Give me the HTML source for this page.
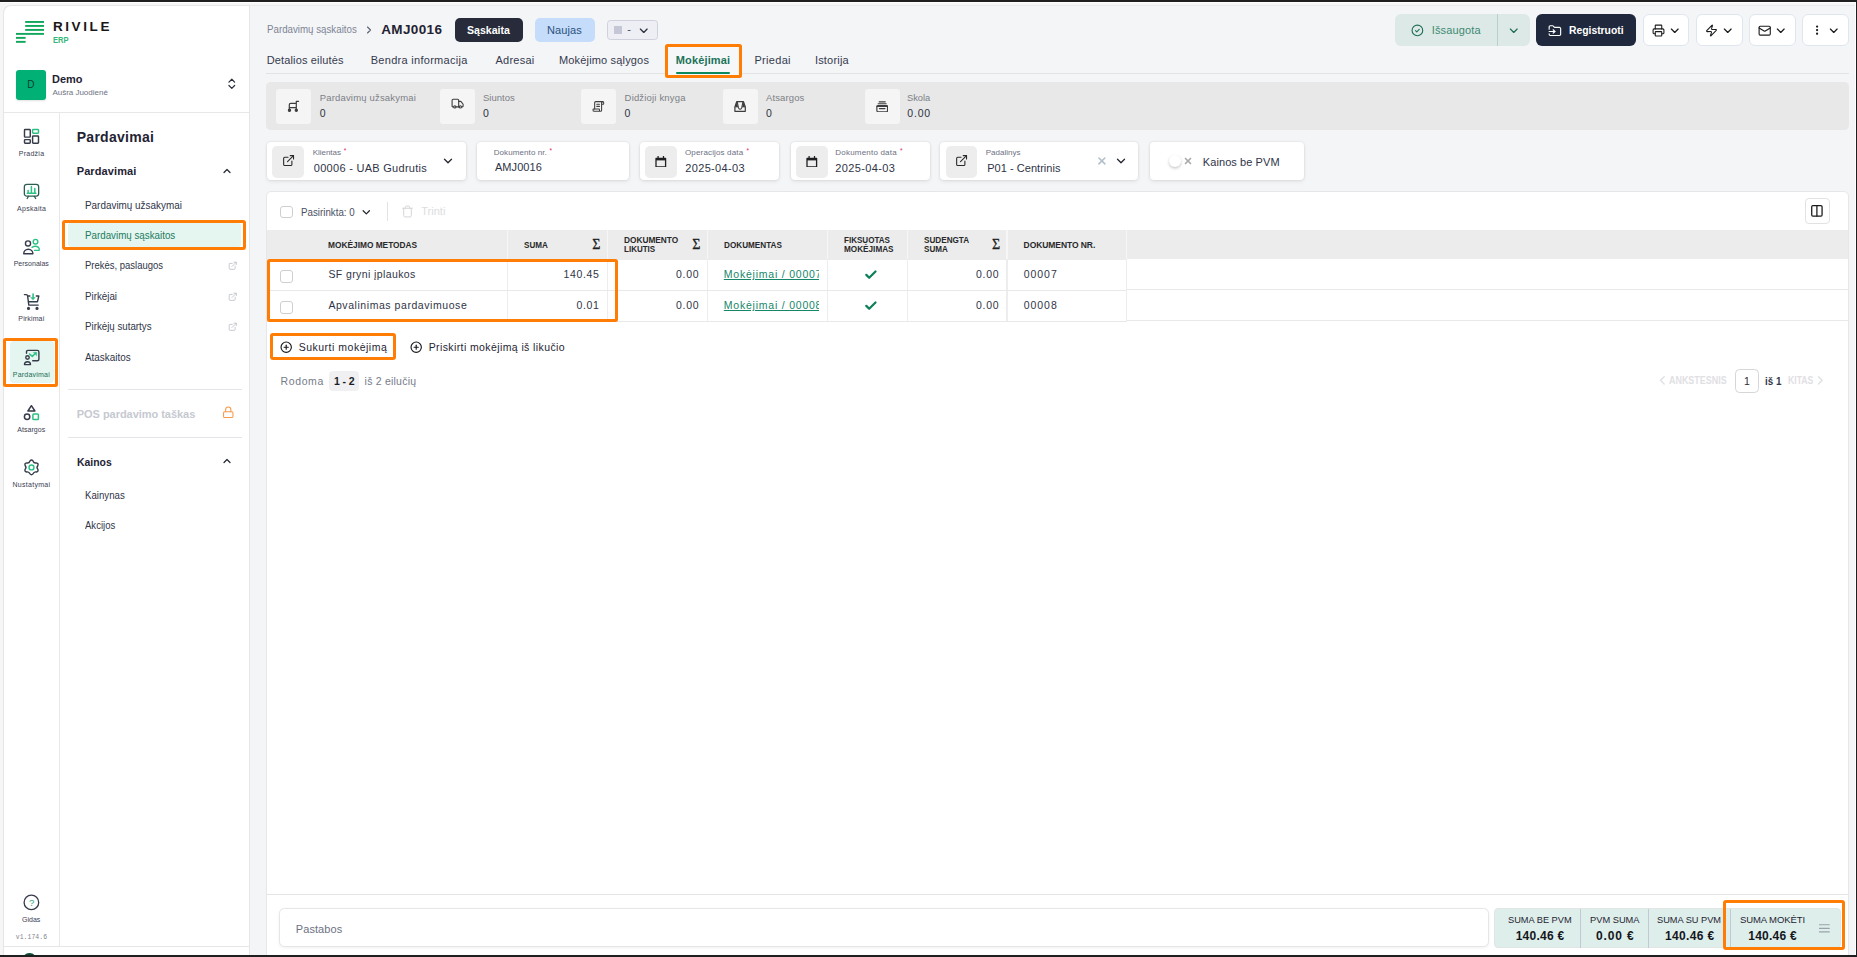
<!DOCTYPE html>
<html lang="lt"><head><meta charset="utf-8"><title>Rivile ERP – Pardavimų sąskaitos – AMJ0016</title>
<style>html,body{margin:0;padding:0}
html{background:#f4f5f7}
body{width:1857px;height:957px;overflow:hidden;position:relative;background:#f4f5f7;font-family:"Liberation Sans",sans-serif;-webkit-font-smoothing:antialiased}
body div,body span,body b,body a,body label,body h1,body svg,body aside,body main,header,nav,section,form,footer{position:absolute;box-sizing:border-box;margin:0;padding:0}
header,nav,section,form,footer{left:0;top:0;width:0;height:0}
.t{white-space:nowrap;line-height:1;font-weight:400;transform-origin:0 0}
aside{left:3.2px;top:5px;width:246.8px;height:952px;overflow:hidden}
main{left:0;top:0;width:1857px;height:957px;overflow:hidden}
.frame{background:#1f1f1f}
</style></head>
<body>
<!-- window frame --><div style="left:0px;top:3.3px;width:1857px;height:2.2px;background:#f6f6f6"></div><div style="left:250px;top:5.3px;width:1606px;height:0.8px;background:#ebebec"></div><div style="left:0px;top:5px;width:4px;height:952px;background:#f6f6f6"></div>
<main><header><span class="t" style="left:266.70px;top:24px;font-size:10.0px;line-height:11px;transform:scaleX(0.9733);color:#7d8495;">Pardavimų sąskaitos</span><svg style="left:363px;top:24.2px;width:12px;height:12px;" viewBox="0 0 24 24" fill="none" stroke-linecap="round" stroke-linejoin="round" stroke="#5d6270" stroke-width="2.2"><path d="m9 18 6-6-6-6"/></svg><h1 class="t" style="left:381.20px;top:22px;font-size:13.5px;line-height:15px;letter-spacing:0.362px;font-weight:700;color:#1f2333;">AMJ0016</h1><div style="left:454.8px;top:17.9px;width:68px;height:24px;background:#272b3a;border-radius:5px"></div><b class="t" style="left:467.20px;top:24px;font-size:11.0px;line-height:12px;transform:scaleX(0.9621);font-weight:700;color:#fff;">Sąskaita</b><div style="left:535px;top:17.9px;width:59.5px;height:24px;background:#c5dcfb;border-radius:5px"></div><span class="t" style="left:546.90px;top:24px;font-size:11.0px;line-height:12px;letter-spacing:0.112px;color:#2a527c;">Naujas</span><div style="left:606.8px;top:20px;width:50.8px;height:19.8px;background:#eeeff4;border:1px solid #cfd1dc;border-radius:3.5px"></div><div style="left:613.7px;top:26px;width:8.1px;height:7.9px;background:#c6c7d6"></div><span class="t" style="left:627.30px;top:23px;font-size:11.0px;line-height:12px;color:#3f4454;">-</span><svg style="left:637.3px;top:24.2px;width:13.5px;height:13.5px;" viewBox="0 0 24 24" fill="none" stroke-linecap="round" stroke-linejoin="round" stroke="#2d3140" stroke-width="2.3"><path d="m6 9 6 6 6-6"/></svg></header><nav><span class="t" style="left:266.70px;top:54px;font-size:11.0px;line-height:12px;letter-spacing:0.147px;color:#353a4e;">Detalios eilutės</span><span class="t" style="left:370.70px;top:54px;font-size:11.0px;line-height:12px;letter-spacing:0.289px;color:#353a4e;">Bendra informacija</span><span class="t" style="left:495.50px;top:54px;font-size:11.0px;line-height:12px;letter-spacing:0.241px;color:#353a4e;">Adresai</span><span class="t" style="left:559.00px;top:54px;font-size:11.0px;line-height:12px;letter-spacing:0.165px;color:#353a4e;">Mokėjimo sąlygos</span><span class="t" style="left:754.40px;top:54px;font-size:11.0px;line-height:12px;letter-spacing:0.317px;color:#353a4e;">Priedai</span><span class="t" style="left:814.90px;top:54px;font-size:11.0px;line-height:12px;letter-spacing:0.203px;color:#353a4e;">Istorija</span><div style="left:266px;top:72.7px;width:1583px;height:1px;background:#e3e3e5"></div><div style="left:664.7px;top:44.1px;width:77px;height:33.7px;border:3.2px solid #ff7d05;border-radius:2.5px;background:#f6f7f9"></div><b class="t" style="left:675.80px;top:54px;font-size:11.0px;line-height:12px;letter-spacing:0.134px;font-weight:700;color:#1b7359;">Mokėjimai</b><div style="left:675.7px;top:71.9px;width:54.4px;height:2.1px;background:#0b8a60;border-radius:1px"></div></nav><header><div style="left:1395.3px;top:14px;width:134.8px;height:32px;background:#dde9e7;border-radius:6px"></div><div style="left:1497.2px;top:14px;width:1px;height:32px;background:#b9d0c9"></div><svg style="left:1411px;top:23.8px;width:12.8px;height:12.8px;" viewBox="0 0 24 24" fill="none" stroke-linecap="round" stroke-linejoin="round" stroke="#1f6e56" stroke-width="2.1"><circle cx="12" cy="12" r="10"/><path d="m8.5 12.5 2.3 2.2 4.7-4.6"/></svg><span class="t" style="left:1431.70px;top:24px;font-size:11.0px;line-height:12px;letter-spacing:0.152px;color:#3c8a71;">Išsaugota</span><svg style="left:1506.8px;top:23.8px;width:13.5px;height:13.5px;" viewBox="0 0 24 24" fill="none" stroke-linecap="round" stroke-linejoin="round" stroke="#1f6e56" stroke-width="2.2"><path d="m6 9 6 6 6-6"/></svg><div style="left:1536.1px;top:14px;width:99.9px;height:32px;background:#1f283c;border-radius:6px"></div><svg style="left:1548.4px;top:23.5px;width:13.8px;height:13.8px;" viewBox="0 0 24 24" fill="none" stroke-linecap="round" stroke-linejoin="round" stroke="#fff" stroke-width="2"><path d="M2 9V5a2 2 0 0 1 2-2h3.9a2 2 0 0 1 1.69.9l.81 1.2a2 2 0 0 0 1.67.9H20a2 2 0 0 1 2 2v10a2 2 0 0 1-2 2H4a2 2 0 0 1-2-2v-1"/><path d="M2 13h10"/><path d="m9 16 3-3-3-3"/></svg><b class="t" style="left:1568.90px;top:24px;font-size:11.0px;line-height:12px;transform:scaleX(0.9397);font-weight:700;color:#fff;">Registruoti</b><div style="left:1643.2px;top:14.2px;width:45.6px;height:31.4px;background:#fff;border:1px solid #dfe6f0;border-radius:6px"></div><div style="left:1696.2px;top:14.2px;width:46.4px;height:31.4px;background:#fff;border:1px solid #dfe6f0;border-radius:6px"></div><div style="left:1749.2px;top:14.2px;width:46.4px;height:31.4px;background:#fff;border:1px solid #dfe6f0;border-radius:6px"></div><div style="left:1802.2px;top:14.2px;width:46.4px;height:31.4px;background:#fff;border:1px solid #dfe6f0;border-radius:6px"></div><svg style="left:1651.7px;top:23.6px;width:13px;height:13px;" viewBox="0 0 24 24" fill="none" stroke-linecap="round" stroke-linejoin="round" stroke="#1c1c1e" stroke-width="2"><path d="M6 18H4a2 2 0 0 1-2-2v-5a2 2 0 0 1 2-2h16a2 2 0 0 1 2 2v5a2 2 0 0 1-2 2h-2"/><path d="M6 9V3a1 1 0 0 1 1-1h10a1 1 0 0 1 1 1v6"/><rect x="6" y="14" width="12" height="8" rx="1"/></svg><svg style="left:1704.9px;top:23.6px;width:13px;height:13px;" viewBox="0 0 24 24" fill="none" stroke-linecap="round" stroke-linejoin="round" stroke="#1c1c1e" stroke-width="2"><path d="M4 14a1 1 0 0 1-.78-1.63l9.9-10.2a.5.5 0 0 1 .86.46l-1.92 6.02A1 1 0 0 0 13 10h7a1 1 0 0 1 .78 1.63l-9.9 10.2a.5.5 0 0 1-.86-.46l1.92-6.02A1 1 0 0 0 11 14z"/></svg><svg style="left:1757.6px;top:23.6px;width:13.4px;height:13.4px;" viewBox="0 0 24 24" fill="none" stroke-linecap="round" stroke-linejoin="round" stroke="#1c1c1e" stroke-width="2"><rect width="20" height="16" x="2" y="4" rx="2"/><path d="m22 7-8.97 5.7a1.94 1.94 0 0 1-2.06 0L2 7"/></svg><svg style="left:1811.4px;top:24.4px;width:12.2px;height:12.2px;" viewBox="0 0 24 24" fill="none" stroke-linecap="round" stroke-linejoin="round" stroke="#1c1c1e" stroke-width="2"><circle cx="12" cy="5" r="1.2" fill="#1c1c1e"/><circle cx="12" cy="12" r="1.2" fill="#1c1c1e"/><circle cx="12" cy="19" r="1.2" fill="#1c1c1e"/></svg><svg style="left:1667.8px;top:23.8px;width:13.5px;height:13.5px;" viewBox="0 0 24 24" fill="none" stroke-linecap="round" stroke-linejoin="round" stroke="#1c1c1e" stroke-width="2.2"><path d="m6 9 6 6 6-6"/></svg><svg style="left:1720.8px;top:23.8px;width:13.5px;height:13.5px;" viewBox="0 0 24 24" fill="none" stroke-linecap="round" stroke-linejoin="round" stroke="#1c1c1e" stroke-width="2.2"><path d="m6 9 6 6 6-6"/></svg><svg style="left:1773.8px;top:23.8px;width:13.5px;height:13.5px;" viewBox="0 0 24 24" fill="none" stroke-linecap="round" stroke-linejoin="round" stroke="#1c1c1e" stroke-width="2.2"><path d="m6 9 6 6 6-6"/></svg><svg style="left:1826.5px;top:23.8px;width:13.5px;height:13.5px;" viewBox="0 0 24 24" fill="none" stroke-linecap="round" stroke-linejoin="round" stroke="#1c1c1e" stroke-width="2.2"><path d="m6 9 6 6 6-6"/></svg></header><section><div style="left:266px;top:82.2px;width:1583px;height:47.6px;background:#e8e8e8;border-radius:4.5px"></div><div style="left:276px;top:89px;width:35px;height:35px;background:#f5f5f5;border-radius:3px"></div><span class="t" style="left:319.70px;top:92px;font-size:9.5px;line-height:11px;letter-spacing:0.177px;color:#7d8087;">Pardavimų užsakymai</span><span class="t" style="left:319.70px;top:107px;font-size:10.5px;line-height:12px;color:#2d3142;">0</span><div style="left:440px;top:89px;width:35px;height:35px;background:#f5f5f5;border-radius:3px"></div><span class="t" style="left:483.00px;top:92px;font-size:9.5px;line-height:11px;letter-spacing:0.011px;color:#7d8087;">Siuntos</span><span class="t" style="left:483.00px;top:107px;font-size:10.5px;line-height:12px;color:#2d3142;">0</span><div style="left:581.2px;top:89px;width:35px;height:35px;background:#f5f5f5;border-radius:3px"></div><span class="t" style="left:624.60px;top:92px;font-size:9.5px;line-height:11px;letter-spacing:0.175px;color:#7d8087;">Didžioji knyga</span><span class="t" style="left:624.60px;top:107px;font-size:10.5px;line-height:12px;color:#2d3142;">0</span><div style="left:723px;top:89px;width:35px;height:35px;background:#f5f5f5;border-radius:3px"></div><span class="t" style="left:766.00px;top:92px;font-size:9.5px;line-height:11px;letter-spacing:0.123px;color:#7d8087;">Atsargos</span><span class="t" style="left:766.00px;top:107px;font-size:10.5px;line-height:12px;color:#2d3142;">0</span><div style="left:864.6px;top:89px;width:35px;height:35px;background:#f5f5f5;border-radius:3px"></div><span class="t" style="left:907.30px;top:92px;font-size:9.5px;line-height:11px;transform:scaleX(0.9763);color:#7d8087;">Skola</span><span class="t" style="left:907.30px;top:107px;font-size:10.5px;line-height:12px;letter-spacing:0.801px;color:#2d3142;">0.00</span><svg style="left:287px;top:100px;width:13px;height:13px;" viewBox="0 0 13 13" fill="none" stroke-linecap="round" stroke-linejoin="round" stroke="#3d3d3f" stroke-width="1.2"><path d="M11.6 1.3H9.3v9.2M9.3 3.4H3.7q-1.4 0-1.4 1.4v4.6M2.3 7.6h7" /><circle cx="2.5" cy="10.3" r="1.1" fill="#3d3d3f"/><circle cx="9.3" cy="10.3" r="1.1" fill="#3d3d3f"/></svg><svg style="left:450.6px;top:97.2px;width:13.2px;height:13.2px;" viewBox="0 0 24 24" fill="none" stroke-linecap="round" stroke-linejoin="round" stroke="#3d3d3f" stroke-width="2"><path d="M14 18V6a2 2 0 0 0-2-2H4a2 2 0 0 0-2 2v11a1 1 0 0 0 1 1h2"/><path d="M15 18H9"/><path d="M19 18h2a1 1 0 0 0 1-1v-3.65a1 1 0 0 0-.22-.624l-3.48-4.35A1 1 0 0 0 17.52 8H14"/><circle cx="17" cy="18" r="2"/><circle cx="7" cy="18" r="2"/></svg><svg style="left:592px;top:99.9px;width:12.8px;height:12.8px;transform:scaleX(-1);" viewBox="0 0 24 24" fill="none" stroke-linecap="round" stroke-linejoin="round" stroke="#3d3d3f" stroke-width="2"><path d="M15 12h-5"/><path d="M15 8h-5"/><path d="M19 17V5a2 2 0 0 0-2-2H4"/><path d="M8 21h12a2 2 0 0 0 2-2v-1a1 1 0 0 0-1-1H11a1 1 0 0 0-1 1v1a2 2 0 1 1-4 0V5a2 2 0 1 0-4 0v2a1 1 0 0 0 1 1h3"/></svg><svg style="left:733.2px;top:99.9px;width:14px;height:13px;" viewBox="0 0 14 13" fill="none" stroke-linecap="round" stroke-linejoin="round" stroke="#3d3d3f" stroke-width="1.2"><path d="M1.9 6.9 3.7 1.7H10.5L12.3 6.9V11.3H1.9z"/><path d="M4.3 1.8 5.5 8Q7.1 10.6 8.7 8L9.9 1.8" stroke-width="1.05"/><path d="M2.2 6.9 3.8 2.2 4.9 6.9zM12 6.9 10.4 2.2 9.3 6.9z" fill="#3d3d3f" stroke-width=".4"/></svg><svg style="left:875.7px;top:100.5px;width:12.4px;height:11.9px;" viewBox="0 0 13 12.5" fill="none" stroke-linecap="round" stroke-linejoin="round" stroke="#3d3d3f" stroke-width="1.25"><path d="M3.3 .9h6.4M2.3 2.9h8.4M3.6 8h5.8"/><rect x=".9" y="4.7" width="11.2" height="6.6" rx="1.2"/><path d="M1.2 5.5h10.6" stroke-width="1.6"/></svg></section><form><div style="left:266.9px;top:141.5px;width:199.1px;height:38.6px;background:#fff;border-radius:4px;box-shadow:0 0 2.5px rgba(0,0,0,.13),0 2px 4px rgba(0,0,0,.06);"></div><div style="left:272.29999999999995px;top:146.1px;width:31.5px;height:31.5px;background:#ededee;border-radius:5px"></div><svg style="left:281.5px;top:153.9px;width:13.2px;height:13.2px;" viewBox="0 0 24 24" fill="none" stroke-linecap="round" stroke-linejoin="round" stroke="#2a2a2c" stroke-width="2"><path d="M15 3h6v6"/><path d="M10 14 21 3"/><path d="M18 13v6a2 2 0 0 1-2 2H5a2 2 0 0 1-2-2V8a2 2 0 0 1 2-2h6"/></svg><label class="t" style="left:312.80px;top:148px;font-size:8.0px;line-height:9px;letter-spacing:-0.052px;color:#6d7183;">Klientas</label><span class="t" style="left:343.70px;top:147px;font-size:6.5px;line-height:7px;color:#e0245e;">*</span><span class="t" style="left:313.80px;top:162px;font-size:11.0px;line-height:12px;letter-spacing:0.284px;color:#2f3447;">00006 - UAB Gudrutis</span><svg style="left:440.9px;top:153.9px;width:14px;height:14px;" viewBox="0 0 24 24" fill="none" stroke-linecap="round" stroke-linejoin="round" stroke="#24262e" stroke-width="2.2"><path d="m6 9 6 6 6-6"/></svg><div style="left:476.9px;top:141.5px;width:152.4px;height:38.6px;background:#fff;border-radius:4px;box-shadow:0 0 2.5px rgba(0,0,0,.13),0 2px 4px rgba(0,0,0,.06);"></div><label class="t" style="left:493.70px;top:148px;font-size:8.0px;line-height:9px;letter-spacing:0.091px;color:#6d7183;">Dokumento nr.</label><span class="t" style="left:549.40px;top:147px;font-size:6.5px;line-height:7px;color:#e0245e;">*</span><span class="t" style="left:494.90px;top:161px;font-size:11.0px;line-height:12px;letter-spacing:0.091px;color:#2f3447;">AMJ0016</span><div style="left:639.8px;top:141.5px;width:139.2px;height:38.6px;background:#fff;border-radius:4px;box-shadow:0 0 2.5px rgba(0,0,0,.13),0 2px 4px rgba(0,0,0,.06);"></div><div style="left:645.1999999999999px;top:146.1px;width:31.5px;height:31.5px;background:#ededee;border-radius:5px"></div><svg style="left:655.4px;top:155.8px;width:11.6px;height:11.6px;" viewBox="0 0 11.6 11.6" fill="none" stroke-linecap="round" stroke-linejoin="round"><path d="M1 2.4h9.6v8.4H1zM3.1 .5v1.6M8.5 .5v1.6" stroke="#1f1f21" stroke-width="1.3"/><path d="M1 2.2h9.6v2.2H1z" fill="#1f1f21" stroke="none"/></svg><label class="t" style="left:685.00px;top:148px;font-size:8.0px;line-height:9px;letter-spacing:0.151px;color:#6d7183;">Operacijos data</label><span class="t" style="left:746.50px;top:147px;font-size:6.5px;line-height:7px;color:#e0245e;">*</span><span class="t" style="left:685.30px;top:162px;font-size:11.0px;line-height:12px;letter-spacing:0.328px;color:#2f3447;">2025-04-03</span><div style="left:790.6px;top:141.5px;width:139px;height:38.6px;background:#fff;border-radius:4px;box-shadow:0 0 2.5px rgba(0,0,0,.13),0 2px 4px rgba(0,0,0,.06);"></div><div style="left:796.0px;top:146.1px;width:31.5px;height:31.5px;background:#ededee;border-radius:5px"></div><svg style="left:806.2px;top:155.8px;width:11.6px;height:11.6px;" viewBox="0 0 11.6 11.6" fill="none" stroke-linecap="round" stroke-linejoin="round"><path d="M1 2.4h9.6v8.4H1zM3.1 .5v1.6M8.5 .5v1.6" stroke="#1f1f21" stroke-width="1.3"/><path d="M1 2.2h9.6v2.2H1z" fill="#1f1f21" stroke="none"/></svg><label class="t" style="left:835.30px;top:148px;font-size:8.0px;line-height:9px;letter-spacing:0.204px;color:#6d7183;">Dokumento data</label><span class="t" style="left:900.00px;top:147px;font-size:6.5px;line-height:7px;color:#e0245e;">*</span><span class="t" style="left:835.30px;top:162px;font-size:11.0px;line-height:12px;letter-spacing:0.361px;color:#2f3447;">2025-04-03</span><div style="left:940.4px;top:141.5px;width:198px;height:38.6px;background:#fff;border-radius:4px;box-shadow:0 0 2.5px rgba(0,0,0,.13),0 2px 4px rgba(0,0,0,.06);"></div><div style="left:945.8px;top:146.1px;width:31.5px;height:31.5px;background:#ededee;border-radius:5px"></div><svg style="left:955.0px;top:153.9px;width:13.2px;height:13.2px;" viewBox="0 0 24 24" fill="none" stroke-linecap="round" stroke-linejoin="round" stroke="#2a2a2c" stroke-width="2"><path d="M15 3h6v6"/><path d="M10 14 21 3"/><path d="M18 13v6a2 2 0 0 1-2 2H5a2 2 0 0 1-2-2V8a2 2 0 0 1 2-2h6"/></svg><label class="t" style="left:985.70px;top:148px;font-size:8.0px;line-height:9px;letter-spacing:0.014px;color:#6d7183;">Padalinys</label><span class="t" style="left:987.20px;top:162px;font-size:11.0px;line-height:12px;letter-spacing:0.039px;color:#2f3447;">P01 - Centrinis</span><svg style="left:1096.4px;top:155px;width:11.8px;height:11.8px;" viewBox="0 0 24 24" fill="none" stroke-linecap="round" stroke-linejoin="round" stroke="#b1bfc9" stroke-width="3.1"><path d="M18 6 6 18"/><path d="m6 6 12 12"/></svg><svg style="left:1114.3px;top:153.9px;width:14px;height:14px;" viewBox="0 0 24 24" fill="none" stroke-linecap="round" stroke-linejoin="round" stroke="#24262e" stroke-width="2.2"><path d="m6 9 6 6 6-6"/></svg><div style="left:1150px;top:141.5px;width:154.3px;height:38.6px;background:#fff;border-radius:4px;box-shadow:0 0 2.5px rgba(0,0,0,.13),0 2px 4px rgba(0,0,0,.06);"></div><div style="left:1168.9px;top:154.6px;width:12.2px;height:12.2px;background:#fff;border-radius:50%;box-shadow:0 1.5px 3px rgba(0,0,0,.22)"></div><svg style="left:1183.3px;top:156px;width:10px;height:10px;" viewBox="0 0 24 24" fill="none" stroke-linecap="round" stroke-linejoin="round" stroke="#aaaaad" stroke-width="4"><path d="M18 6 6 18"/><path d="m6 6 12 12"/></svg><span class="t" style="left:1202.80px;top:156px;font-size:11.0px;line-height:12px;letter-spacing:0.079px;color:#2f3447;">Kainos be PVM</span></form><section><div style="left:266.4px;top:191px;width:1582.2px;height:780px;background:#fff;border:1px solid #e7e7e9;border-radius:5px"></div><div style="left:280px;top:205.9px;width:12.9px;height:12px;border:1px solid #cfcfd2;border-radius:3px;background:#fff"></div><span class="t" style="left:301.20px;top:206px;font-size:10.5px;line-height:12px;transform:scaleX(0.9286);color:#4b5062;">Pasirinkta: 0</span><svg style="left:359.6px;top:205.8px;width:12.6px;height:12.6px;" viewBox="0 0 24 24" fill="none" stroke-linecap="round" stroke-linejoin="round" stroke="#24262e" stroke-width="2.4"><path d="m6 9 6 6 6-6"/></svg><div style="left:387.1px;top:202.2px;width:1px;height:18.6px;background:#e3e3e5"></div><svg style="left:400.8px;top:204.8px;width:13px;height:13px;" viewBox="0 0 24 24" fill="none" stroke-linecap="round" stroke-linejoin="round" stroke="#d3d4d8" stroke-width="1.8"><path d="M3 6h18"/><path d="M19 6v14c0 1-1 2-2 2H7c-1 0-2-1-2-2V6"/><path d="M8 6V4c0-1 1-2 2-2h4c1 0 2 1 2 2v2"/></svg><span class="t" style="left:421.30px;top:205px;font-size:11.0px;line-height:12px;color:#dcdde0;">Trinti</span><div style="left:1805.2px;top:198.4px;width:24.6px;height:25.2px;background:#fff;border:1px solid #e2e2e4;border-radius:4px"></div><svg style="left:1810.4px;top:204.3px;width:13.8px;height:13.8px;" viewBox="0 0 24 24" fill="none" stroke-linecap="round" stroke-linejoin="round" stroke="#1a1a1c" stroke-width="2.2"><rect width="18" height="18" x="3" y="3" rx="2"/><path d="M12 3v18"/></svg><div style="left:267.4px;top:230px;width:1581px;height:28.9px;background:#ececec"></div><div style="left:267.4px;top:230px;width:860px;height:29.7px;background:#ececec"></div><div style="left:506.9px;top:230px;width:1.2px;height:29.3px;background:#f6f6f6"></div><div style="left:506.9px;top:259.3px;width:1.2px;height:62px;background:#ededee"></div><div style="left:606.9px;top:230px;width:1.2px;height:29.3px;background:#f6f6f6"></div><div style="left:606.9px;top:259.3px;width:1.2px;height:62px;background:#ededee"></div><div style="left:706.8px;top:230px;width:1.2px;height:29.3px;background:#f6f6f6"></div><div style="left:706.8px;top:259.3px;width:1.2px;height:62px;background:#ededee"></div><div style="left:826.6px;top:230px;width:1.2px;height:29.3px;background:#f6f6f6"></div><div style="left:826.6px;top:259.3px;width:1.2px;height:62px;background:#ededee"></div><div style="left:906.5px;top:230px;width:1.2px;height:29.3px;background:#f6f6f6"></div><div style="left:906.5px;top:259.3px;width:1.2px;height:62px;background:#ededee"></div><div style="left:1006.4px;top:230px;width:1.2px;height:29.3px;background:#f6f6f6"></div><div style="left:1006.4px;top:259.3px;width:1.2px;height:62px;background:#ededee"></div><div style="left:1126.3px;top:230px;width:1.2px;height:29.3px;background:#f6f6f6"></div><div style="left:1126.3px;top:259.3px;width:1.2px;height:62px;background:#ededee"></div><div style="left:267.4px;top:290px;width:860px;height:1px;background:#e9e9ea"></div><div style="left:1127.4px;top:289.2px;width:720.5px;height:1px;background:#e9e9ea"></div><div style="left:267.4px;top:321px;width:860px;height:1px;background:#e9e9ea"></div><div style="left:1127.4px;top:320.2px;width:720.5px;height:1px;background:#e9e9ea"></div><b class="t" style="left:327.80px;top:240px;font-size:8.5px;line-height:10px;transform:scaleX(0.9801);font-weight:700;color:#29292b;">MOKĖJIMO METODAS</b><b class="t" style="left:523.80px;top:240px;font-size:8.5px;line-height:10px;transform:scaleX(0.9522);font-weight:700;color:#29292b;">SUMA</b><b class="t" style="left:623.80px;top:235px;font-size:8.5px;line-height:10px;transform:scaleX(0.9758);font-weight:700;color:#29292b;">DOKUMENTO</b><b class="t" style="left:623.80px;top:244px;font-size:8.5px;line-height:10px;transform:scaleX(0.9436);font-weight:700;color:#29292b;">LIKUTIS</b><b class="t" style="left:723.90px;top:240px;font-size:8.5px;line-height:10px;transform:scaleX(0.9602);font-weight:700;color:#29292b;">DOKUMENTAS</b><b class="t" style="left:843.50px;top:235px;font-size:8.5px;line-height:10px;transform:scaleX(0.9486);font-weight:700;color:#29292b;">FIKSUOTAS</b><b class="t" style="left:843.50px;top:244px;font-size:8.5px;line-height:10px;transform:scaleX(0.9632);font-weight:700;color:#29292b;">MOKĖJIMAS</b><b class="t" style="left:923.50px;top:235px;font-size:8.5px;line-height:10px;transform:scaleX(0.9589);font-weight:700;color:#29292b;">SUDENGTA</b><b class="t" style="left:923.50px;top:244px;font-size:8.5px;line-height:10px;transform:scaleX(0.9522);font-weight:700;color:#29292b;">SUMA</b><b class="t" style="left:1023.60px;top:240px;font-size:8.5px;line-height:10px;letter-spacing:-0.075px;font-weight:700;color:#29292b;">DOKUMENTO NR.</b><span class="t" style="left:592.20px;top:237px;font-size:14.0px;line-height:15px;color:#1d1d1f;font-family:'Liberation Serif',serif;-webkit-text-stroke:.3px #1d1d1f;">Σ</span><span class="t" style="left:692.20px;top:237px;font-size:14.0px;line-height:15px;color:#1d1d1f;font-family:'Liberation Serif',serif;-webkit-text-stroke:.3px #1d1d1f;">Σ</span><span class="t" style="left:992.00px;top:237px;font-size:14.0px;line-height:15px;color:#1d1d1f;font-family:'Liberation Serif',serif;-webkit-text-stroke:.3px #1d1d1f;">Σ</span><div style="left:267px;top:259px;width:350.6px;height:63px;border:3.2px solid #ff7d05;border-radius:2.5px"></div><div style="left:280px;top:270.20000000000005px;width:12.9px;height:12.6px;border:1px solid #cfcfd2;border-radius:3px;background:#fff"></div><span class="t" style="left:328.40px;top:268px;font-size:10.5px;line-height:12px;letter-spacing:0.401px;color:#2f3447;">SF gryni įplaukos</span><span class="t" style="left:563.40px;top:268px;font-size:10.5px;line-height:12px;letter-spacing:0.665px;color:#2f3447;">140.45</span><span class="t" style="left:676.00px;top:268px;font-size:10.5px;line-height:12px;letter-spacing:0.735px;color:#2f3447;">0.00</span><span class="t" style="left:975.90px;top:268px;font-size:10.5px;line-height:12px;letter-spacing:0.768px;color:#2f3447;">0.00</span><span class="t" style="left:1023.80px;top:268px;font-size:10.5px;line-height:12px;letter-spacing:0.935px;color:#2f3447;">00007</span><svg style="left:864.4px;top:267.6px;width:13.8px;height:13.8px;" viewBox="0 0 24 24" fill="none" stroke-linecap="round" stroke-linejoin="round" stroke="#0f7f5b" stroke-width="3.9"><path d="M20 6 9 17l-5-5"/></svg><div style="left:280px;top:301.20000000000005px;width:12.9px;height:12.6px;border:1px solid #cfcfd2;border-radius:3px;background:#fff"></div><span class="t" style="left:328.40px;top:299px;font-size:10.5px;line-height:12px;letter-spacing:0.559px;color:#2f3447;">Apvalinimas pardavimuose</span><span class="t" style="left:576.60px;top:299px;font-size:10.5px;line-height:12px;letter-spacing:0.601px;color:#2f3447;">0.01</span><span class="t" style="left:676.00px;top:299px;font-size:10.5px;line-height:12px;letter-spacing:0.735px;color:#2f3447;">0.00</span><span class="t" style="left:975.90px;top:299px;font-size:10.5px;line-height:12px;letter-spacing:0.768px;color:#2f3447;">0.00</span><span class="t" style="left:1023.80px;top:299px;font-size:10.5px;line-height:12px;letter-spacing:0.935px;color:#2f3447;">00008</span><svg style="left:864.4px;top:298.6px;width:13.8px;height:13.8px;" viewBox="0 0 24 24" fill="none" stroke-linecap="round" stroke-linejoin="round" stroke="#0f7f5b" stroke-width="3.9"><path d="M20 6 9 17l-5-5"/></svg><div style="left:723px;top:266px;width:95.9px;height:17px;overflow:hidden"><a class="t" style="left:0.80px;top:2px;font-size:10.5px;line-height:12px;letter-spacing:0.778px;color:#15866a;text-decoration:underline;text-decoration-thickness:1.1px;text-underline-offset:1.2px">Mokėjimai / 00007</a></div><div style="left:723px;top:297px;width:95.9px;height:17px;overflow:hidden"><a class="t" style="left:0.80px;top:2px;font-size:10.5px;line-height:12px;letter-spacing:0.778px;color:#15866a;text-decoration:underline;text-decoration-thickness:1.1px;text-underline-offset:1.2px">Mokėjimai / 00008</a></div><div style="left:270px;top:333px;width:125.8px;height:27px;border:3.2px solid #ff7d05;border-radius:3px"></div><svg style="left:280.2px;top:341.4px;width:12.4px;height:12.4px;" viewBox="0 0 24 24" fill="none" stroke-linecap="round" stroke-linejoin="round" stroke="#17181c" stroke-width="2.2"><circle cx="12" cy="12" r="10"/><path d="M8 12h8"/><path d="M12 8v8"/></svg><span class="t" style="left:298.70px;top:341px;font-size:10.5px;line-height:12px;letter-spacing:0.501px;color:#1f2333;">Sukurti mokėjimą</span><svg style="left:410.2px;top:341.4px;width:12.4px;height:12.4px;" viewBox="0 0 24 24" fill="none" stroke-linecap="round" stroke-linejoin="round" stroke="#17181c" stroke-width="2.2"><circle cx="12" cy="12" r="10"/><path d="M8 12h8"/><path d="M12 8v8"/></svg><span class="t" style="left:428.70px;top:341px;font-size:10.5px;line-height:12px;letter-spacing:0.396px;color:#1f2333;">Priskirti mokėjimą iš likučio</span><span class="t" style="left:280.60px;top:375px;font-size:10.5px;line-height:12px;letter-spacing:0.590px;color:#767b8a;">Rodoma</span><div style="left:328.9px;top:370.6px;width:30px;height:20.9px;background:#f0f0f2;border-radius:4px"></div><b class="t" style="left:333.90px;top:375px;font-size:10.5px;line-height:12px;letter-spacing:-0.093px;font-weight:700;color:#1c1d22;">1 - 2</b><span class="t" style="left:364.60px;top:375px;font-size:10.5px;line-height:12px;letter-spacing:0.220px;color:#767b8a;">iš 2 eilučių</span><svg style="left:1654.5px;top:373.4px;width:14.7px;height:14.7px;" viewBox="0 0 24 24" fill="none" stroke-linecap="round" stroke-linejoin="round" stroke="#dfe0e4" stroke-width="2.3"><path d="m15 18-6-6 6-6"/></svg><span class="t" style="left:1669.30px;top:375px;font-size:10.0px;line-height:11px;transform:scaleX(0.8938);font-weight:700;color:#dfe0e4;">ANKSTESNIS</span><div style="left:1735px;top:369.1px;width:23.7px;height:23.5px;background:#fff;border:1px solid #d6d6d9;border-radius:4.5px"></div><span class="t" style="left:1743.90px;top:375px;font-size:10.5px;line-height:12px;color:#2a2c36;">1</span><span class="t" style="left:1764.80px;top:376px;font-size:10.0px;line-height:11px;transform:scaleX(0.9814);font-weight:700;color:#34384a;">iš 1</span><span class="t" style="left:1788.20px;top:375px;font-size:10.0px;line-height:11px;transform:scaleX(0.8686);font-weight:700;color:#dfe0e4;">KITAS</span><svg style="left:1813.2px;top:373.4px;width:14.7px;height:14.7px;" viewBox="0 0 24 24" fill="none" stroke-linecap="round" stroke-linejoin="round" stroke="#dfe0e4" stroke-width="2.3"><path d="m9 18 6-6-6-6"/></svg></section><footer><div style="left:267.4px;top:893.8px;width:1580.5px;height:1px;background:#e4e4e6"></div><div style="left:279.4px;top:908.1px;width:1209.4px;height:39.2px;background:#fff;border:1.2px solid #e6e6e8;border-radius:5.5px;box-shadow:0 1px 3px rgba(40,50,80,.07)"></div><span class="t" style="left:295.80px;top:923px;font-size:11.0px;line-height:12px;letter-spacing:0.077px;color:#6d7282;">Pastabos</span><div style="left:1494.4px;top:908.1px;width:346.9px;height:40.3px;background:#deeeea;border:1px solid #e1e6e5;border-radius:4px"></div><div style="left:1580.4px;top:908.6px;width:1px;height:39.4px;background:#c3c9d4"></div><div style="left:1648.2px;top:908.6px;width:1px;height:39.4px;background:#c3c9d4"></div><div style="left:1730.4px;top:908.6px;width:1px;height:39.4px;background:#c3c9d4"></div><span class="t" style="left:1508.00px;top:914px;font-size:9.5px;line-height:11px;transform:scaleX(0.9717);color:#1f2433;">SUMA BE PVM</span><b class="t" style="left:1515.70px;top:929px;font-size:12.0px;line-height:14px;letter-spacing:0.238px;font-weight:700;color:#14161d;">140.46 €</b><span class="t" style="left:1589.80px;top:914px;font-size:9.5px;line-height:11px;transform:scaleX(0.9779);color:#1f2433;">PVM SUMA</span><b class="t" style="left:1596.00px;top:929px;font-size:12.0px;line-height:14px;letter-spacing:0.862px;font-weight:700;color:#14161d;">0.00 €</b><span class="t" style="left:1657.30px;top:914px;font-size:9.5px;line-height:11px;transform:scaleX(0.9700);color:#1f2433;">SUMA SU PVM</span><b class="t" style="left:1665.10px;top:929px;font-size:12.0px;line-height:14px;letter-spacing:0.323px;font-weight:700;color:#14161d;">140.46 €</b><span class="t" style="left:1739.90px;top:914px;font-size:9.5px;line-height:11px;letter-spacing:-0.077px;color:#1f2433;">SUMA MOKĖTI</span><b class="t" style="left:1748.20px;top:929px;font-size:12.0px;line-height:14px;letter-spacing:0.266px;font-weight:700;color:#14161d;">140.46 €</b><div style="left:1723.4px;top:900px;width:121.6px;height:49.9px;border:3.2px solid #ff7d05;border-radius:3px"></div><svg style="left:1819.2px;top:924px;width:10.6px;height:9px;" viewBox="0 0 10.6 9" fill="none" stroke-linecap="round" stroke-linejoin="round" stroke="#9aa3ab" stroke-width="1.1"><path d="M.3 .8h10M.3 4.4h10M.3 7.9h10"/></svg></footer></main>
<aside><div class="sb-bg" style="left:0px;top:0px;width:246.8px;height:952px;background:#fff;border:1px solid #e6e6e6;border-bottom:0;border-radius:8px 0 0 0"></div><svg style="left:12.8px;top:16px;width:28px;height:22px;" viewBox="0 0 28 22" fill="none" stroke-linecap="round" stroke-linejoin="round"><rect x="9.20" y="0.00" width="18.80" height="1.9" fill="#10a65c"/><rect x="9.20" y="3.98" width="18.80" height="1.9" fill="#10a65c"/><rect x="9.20" y="7.96" width="18.80" height="1.9" fill="#10a65c"/><rect x="0.00" y="11.94" width="28.00" height="1.9" fill="#10a65c"/><rect x="0.00" y="15.92" width="9.60" height="1.9" fill="#10a65c"/><rect x="0.00" y="19.90" width="9.60" height="1.9" fill="#10a65c"/></svg><b class="t" style="left:49.70px;top:14px;font-size:13.5px;line-height:15px;letter-spacing:2.620px;font-weight:700;color:#1a1517;">RIVILE</b><b class="t" style="left:49.70px;top:30px;font-size:8.5px;line-height:10px;transform:scaleX(0.8929);font-weight:700;color:#35b877;">ERP</b><div style="left:12.8px;top:65px;width:30px;height:30px;background:#00b074;border-radius:3px;box-shadow:0 1px 2px rgba(0,0,0,.12)"></div><span class="t" style="left:24.00px;top:74px;font-size:10.0px;line-height:11px;color:#0b3f30;">D</span><b class="t" style="left:49.20px;top:68px;font-size:11.5px;line-height:12px;transform:scaleX(0.9522);font-weight:700;color:#1f2333;">Demo</b><span class="t" style="left:49.20px;top:83px;font-size:8.0px;line-height:9px;letter-spacing:-0.011px;color:#6e7484;">Aušra Juodienė</span><svg style="left:221.60000000000002px;top:71.6px;width:13.6px;height:13.6px;" viewBox="0 0 24 24" fill="none" stroke-linecap="round" stroke-linejoin="round" stroke="#2b2f3a" stroke-width="2.2"><path d="m7 15 5 5 5-5"/><path d="m7 9 5-5 5 5"/></svg><div style="left:0.7999999999999998px;top:107.2px;width:245px;height:1px;background:#e8e8e9"></div><div style="left:55.599999999999994px;top:108px;width:1px;height:833.5px;background:#e8e8e9"></div><div style="left:0.7999999999999998px;top:941px;width:245px;height:1px;background:#e6e6e7"></div><div style="left:19.3px;top:948px;width:15px;height:15px;background:#0c4b39;border-radius:50%"></div><nav><svg style="left:19.8px;top:123px;width:17px;height:17px;" viewBox="0 0 17 17" fill="none" stroke-linecap="round" stroke-linejoin="round" stroke-width="1.45"><rect x="1.5" y="1.5" width="5.75" height="7.6" rx=".7" stroke="#363b4a"/><rect x="9.6" y="1.5" width="5.9" height="3.7" rx=".7" stroke="#2cc084"/><rect x="1.5" y="11.6" width="5.75" height="3.7" rx=".7" stroke="#363b4a"/><rect x="9.6" y="7.9" width="5.9" height="7.4" rx=".7" stroke="#363b4a"/></svg><span class="t" style="left:15.65px;top:145px;font-size:7.0px;line-height:7px;letter-spacing:0.243px;color:#3b4052;">Pradžia</span><svg style="left:19.8px;top:178px;width:17px;height:17px;" viewBox="0 0 17 17" fill="none" stroke-linecap="round" stroke-linejoin="round" stroke-width="1.3"><rect x="1.35" y="1.35" width="14.3" height="11.7" rx="2.4" stroke="#2c5d50"/><path d="M5.4 13.4 4.2 15.5M11.4 13.4l1.3 2.1" stroke="#2c5d50"/><path d="M4.3 10.2h8.6M5.1 10v-2.6M8.4 10V3.6M11.8 10V5.6" stroke="#2cc084" stroke-width="1.5"/></svg><span class="t" style="left:13.85px;top:200px;font-size:7.0px;line-height:7px;letter-spacing:0.278px;color:#3b4052;">Apskaita</span><svg style="left:18.8px;top:233px;width:19px;height:18px;" viewBox="0 0 19 18" fill="none" stroke-linecap="round" stroke-linejoin="round" stroke-width="1.4"><circle cx="6" cy="5.4" r="2.55" stroke="#363b4a"/><path d="M1.7 15.8a4.6 4.6 0 0 1 9.2 0z" stroke="#363b4a"/><circle cx="13.5" cy="3.7" r="2.35" stroke="#2cc084"/><path d="M10 9.3q3.4-2.3 6.5.1 1.3 1.5.6 3l-4.5 0" stroke="#2cc084"/></svg><span class="t" style="left:10.45px;top:255px;font-size:7.0px;line-height:7px;letter-spacing:0.020px;color:#3b4052;">Personalas</span><svg style="left:19.8px;top:288px;width:17px;height:17px;" viewBox="0 0 17 17" fill="none" stroke-linecap="round" stroke-linejoin="round" stroke-width="1.4"><path d="M1.4 1.6h1.8q1.2 0 1.4 1.2l1.2 9.3h9.4" stroke="#363b4a"/><path d="M4.7 3h2.2M13.3 3h2.5l-1.3 5.7H5.5" stroke="#363b4a"/><circle cx="5.5" cy="15.4" r="1.55" fill="#363b4a" stroke="none"/><circle cx="14" cy="15.4" r="1.55" fill="#363b4a" stroke="none"/><path d="M10.1 1v4" stroke="#2cc084" stroke-width="1.6"/><path d="M8.1 4.5h4L10.1 6.8z" fill="#2cc084" stroke="#2cc084" stroke-width=".6"/></svg><span class="t" style="left:15.15px;top:310px;font-size:7.0px;line-height:7px;letter-spacing:0.138px;color:#3b4052;">Pirkimai</span><div style="left:-0.10000000000000009px;top:333px;width:54.8px;height:49px;border:3.2px solid #ff7d05;border-radius:2.5px;background:#fff"></div><div style="left:6.8px;top:336.4px;width:44px;height:42px;background:#e4f6ef;border-radius:4px"></div><svg style="left:19.8px;top:344px;width:17px;height:17px;" viewBox="0 0 17 17" fill="none" stroke-linecap="round" stroke-linejoin="round" stroke-width="1.4"><path d="M3.5 4.2V2.9q0-1.5 1.5-1.5h9.4q1.5 0 1.5 1.5v7.3q0 1.5-1.5 1.5H9.7" stroke="#363b4a"/><circle cx="4.5" cy="8.5" r="1.75" stroke="#363b4a"/><path d="M1.5 15.6q0-2.9 3-2.9t3 2.9z" stroke="#363b4a"/><path d="M6.5 5l2.8 2.4 3.4-3.4" stroke="#2cc084" stroke-width="1.5"/><path d="M10.6 3.4h3v3z" fill="#2cc084" stroke="#2cc084" stroke-width=".5"/></svg><span class="t" style="left:9.65px;top:366px;font-size:7.0px;line-height:7px;letter-spacing:0.205px;color:#1d6b55;">Pardavimai</span><svg style="left:19.8px;top:399px;width:17px;height:17px;" viewBox="0 0 17 17" fill="none" stroke-linecap="round" stroke-linejoin="round" stroke-width="1.5"><path d="M8.4 1.7 4.9 7h7z" stroke="#363b4a"/><circle cx="4.1" cy="12.7" r="2.7" stroke="#363b4a"/><rect x="9.9" y="10" width="5.5" height="5.5" rx=".8" stroke="#2cc084"/></svg><span class="t" style="left:13.95px;top:421px;font-size:7.0px;line-height:7px;letter-spacing:0.082px;color:#3b4052;">Atsargos</span><svg style="left:19.8px;top:454px;width:17px;height:17px;" viewBox="0 0 17 17" fill="none" stroke-linecap="round" stroke-linejoin="round" stroke-width="1.4"><path d="M7.00 1.91Q8.50 0.11 10.00 1.91Q10.85 4.33 13.37 3.86Q15.68 4.26 14.87 6.45Q13.20 8.40 14.87 10.35Q15.68 12.54 13.37 12.94Q10.85 12.47 10.00 14.89Q8.50 16.69 7.00 14.89Q6.15 12.47 3.63 12.94Q1.32 12.54 2.13 10.35Q3.80 8.40 2.13 6.45Q1.32 4.26 3.63 3.86Q6.15 4.33 7.00 1.91z" stroke="#363b4a"/><circle cx="8.5" cy="8.4" r="2.45" stroke="#2cc084" stroke-width="1.45"/></svg><span class="t" style="left:9.35px;top:476px;font-size:7.0px;line-height:7px;letter-spacing:0.272px;color:#3b4052;">Nustatymai</span><svg style="left:19.8px;top:889px;width:17px;height:17px;" viewBox="0 0 17 17" fill="none" stroke-linecap="round" stroke-linejoin="round" stroke-width="1.3"><circle cx="8.4" cy="8.4" r="7.3" stroke="#363b4a"/></svg><span class="t" style="left:25.70px;top:892px;font-size:9.5px;line-height:11px;color:#2aa777;">?</span><span class="t" style="left:18.90px;top:911px;font-size:7.0px;line-height:7px;color:#3b4052;">Gidas</span><span class="t" style="left:12.60px;top:929px;font-size:6.4px;line-height:7px;letter-spacing:0.079px;color:#7f8490;font-family:'Liberation Mono',monospace;">v1.174.6</span></nav><nav><b class="t" style="left:73.50px;top:124px;font-size:14.0px;line-height:16px;letter-spacing:0.287px;font-weight:700;color:#1f2333;">Pardavimai</b><b class="t" style="left:73.50px;top:160px;font-size:11.0px;line-height:12px;letter-spacing:0.106px;font-weight:700;color:#1f2333;">Pardavimai</b><svg style="left:218.0px;top:160.2px;width:12px;height:12px;" viewBox="0 0 24 24" fill="none" stroke-linecap="round" stroke-linejoin="round" stroke="#23262f" stroke-width="2.4"><path d="m18 15-6-6-6 6"/></svg><div style="left:58.8px;top:215.2px;width:183.6px;height:29.5px;border:3.2px solid #ff7d05;border-radius:3px;background:#fff"></div><div style="left:64.8px;top:218.3px;width:173.5px;height:23.3px;background:#e4f6ef;border-radius:3px"></div><span class="t" style="left:81.50px;top:194px;font-size:10.5px;line-height:12px;transform:scaleX(0.9436);color:#2f3447;">Pardavimų užsakymai</span><span class="t" style="left:81.50px;top:224px;font-size:10.5px;line-height:12px;transform:scaleX(0.9314);color:#1d7a5f;">Pardavimų sąskaitos</span><span class="t" style="left:81.50px;top:254px;font-size:10.5px;line-height:12px;transform:scaleX(0.9032);color:#2f3447;">Prekės, paslaugos</span><span class="t" style="left:81.50px;top:285px;font-size:10.5px;line-height:12px;transform:scaleX(0.9298);color:#2f3447;">Pirkėjai</span><span class="t" style="left:81.50px;top:315px;font-size:10.5px;line-height:12px;transform:scaleX(0.9270);color:#2f3447;">Pirkėjų sutartys</span><span class="t" style="left:81.50px;top:346px;font-size:10.5px;line-height:12px;transform:scaleX(0.9421);color:#2f3447;">Ataskaitos</span><svg style="left:224.60000000000002px;top:256px;width:9.5px;height:9.5px;" viewBox="0 0 24 24" fill="none" stroke-linecap="round" stroke-linejoin="round" stroke="#b9bcc4" stroke-width="2"><path d="M15 3h6v6"/><path d="M10 14 21 3"/><path d="M18 13v6a2 2 0 0 1-2 2H5a2 2 0 0 1-2-2V8a2 2 0 0 1 2-2h6"/></svg><svg style="left:224.60000000000002px;top:286.5px;width:9.5px;height:9.5px;" viewBox="0 0 24 24" fill="none" stroke-linecap="round" stroke-linejoin="round" stroke="#b9bcc4" stroke-width="2"><path d="M15 3h6v6"/><path d="M10 14 21 3"/><path d="M18 13v6a2 2 0 0 1-2 2H5a2 2 0 0 1-2-2V8a2 2 0 0 1 2-2h6"/></svg><svg style="left:224.60000000000002px;top:316.8px;width:9.5px;height:9.5px;" viewBox="0 0 24 24" fill="none" stroke-linecap="round" stroke-linejoin="round" stroke="#b9bcc4" stroke-width="2"><path d="M15 3h6v6"/><path d="M10 14 21 3"/><path d="M18 13v6a2 2 0 0 1-2 2H5a2 2 0 0 1-2-2V8a2 2 0 0 1 2-2h6"/></svg><div style="left:64.89999999999999px;top:384.2px;width:173.5px;height:1px;background:#e4e5e8"></div><b class="t" style="left:73.60px;top:403px;font-size:11.0px;line-height:12px;letter-spacing:-0.037px;font-weight:700;color:#c6c9d0;">POS pardavimo taškas</b><svg style="left:218.8px;top:401px;width:12.5px;height:12.5px;" viewBox="0 0 24 24" fill="none" stroke-linecap="round" stroke-linejoin="round" stroke="#f7994a" stroke-width="2"><rect width="18" height="11" x="3" y="11" rx="2" ry="2"/><path d="M7 11V7a5 5 0 0 1 10 0v4"/></svg><div style="left:64.89999999999999px;top:431.8px;width:173.5px;height:1px;background:#e4e5e8"></div><b class="t" style="left:73.60px;top:451px;font-size:11.0px;line-height:12px;transform:scaleX(0.9465);font-weight:700;color:#1f2333;">Kainos</b><svg style="left:218.0px;top:450.2px;width:12px;height:12px;" viewBox="0 0 24 24" fill="none" stroke-linecap="round" stroke-linejoin="round" stroke="#23262f" stroke-width="2.4"><path d="m18 15-6-6-6 6"/></svg><span class="t" style="left:81.50px;top:484px;font-size:10.5px;line-height:12px;transform:scaleX(0.9198);color:#2f3447;">Kainynas</span><span class="t" style="left:81.50px;top:514px;font-size:10.5px;line-height:12px;transform:scaleX(0.9089);color:#2f3447;">Akcijos</span></nav></aside>
<div class="frame" style="left:0;top:0;width:1857px;height:1.9px"></div>
<div style="left:0;top:1.9px;width:1857px;height:1.4px;background:#fff"></div>
<div style="left:1854.8px;top:2px;width:1px;height:953px;background:#fff"></div>
<div class="frame" style="left:1855.7px;top:0;width:1.3px;height:957px"></div>
<div class="frame" style="left:0;top:954.7px;width:1857px;height:2.3px"></div>
</body></html>
